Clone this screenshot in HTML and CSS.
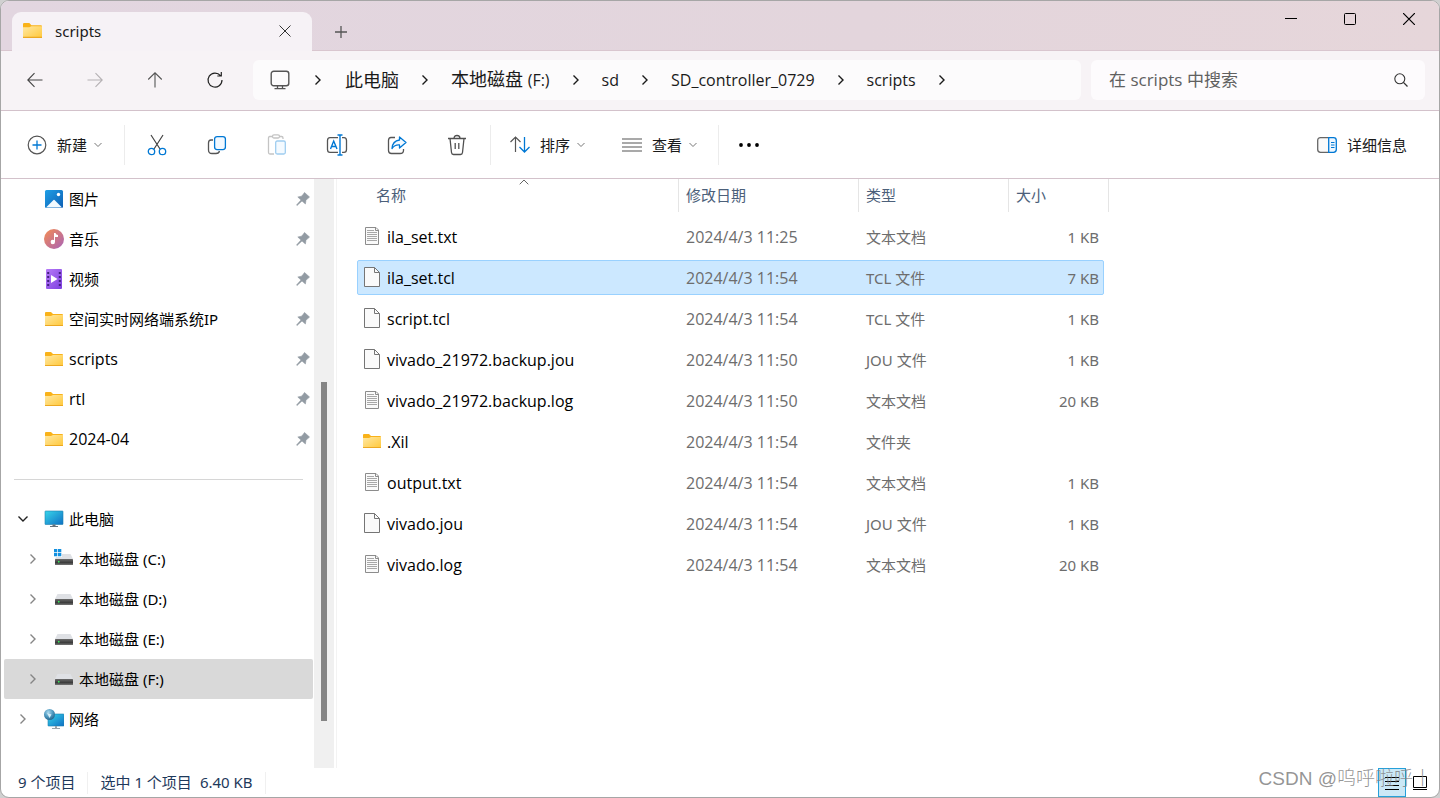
FILE: index.html
```html
<!DOCTYPE html>
<html lang="zh-CN">
<head>
<meta charset="utf-8">
<title>scripts</title>
<link rel="stylesheet" href="styles.css">
</head>
<body>
<svg class="defs" aria-hidden="true">
  <defs>
    <linearGradient id="gFolder" x1="0" y1="0" x2="1" y2="1"><stop offset="0" stop-color="#ffe8a3"/><stop offset="1" stop-color="#ffc83a"/></linearGradient>
    <linearGradient id="gPic" x1="0" y1="0" x2="1" y2="1"><stop offset="0" stop-color="#1e9fe6"/><stop offset="1" stop-color="#0f5fb4"/></linearGradient>
    <linearGradient id="gMusic" x1="0" y1="0" x2="1" y2="1"><stop offset="0" stop-color="#f58d52"/><stop offset="1" stop-color="#a862b8"/></linearGradient>
    <linearGradient id="gVideo" x1="0" y1="0" x2="1" y2="1"><stop offset="0" stop-color="#b77bf7"/><stop offset="1" stop-color="#7d3fe0"/></linearGradient>
    <linearGradient id="gPc" x1="0" y1="0" x2="1" y2="1"><stop offset="0" stop-color="#37d5ea"/><stop offset="1" stop-color="#1070c4"/></linearGradient>
    <linearGradient id="gDrive" x1="0" y1="0" x2="0" y2="1"><stop offset="0" stop-color="#6a6a6a"/><stop offset="0.6" stop-color="#3c3c3c"/><stop offset="1" stop-color="#777"/></linearGradient>
    <radialGradient id="gGlobe" cx="0.4" cy="0.3" r="0.7"><stop offset="0" stop-color="#a8d8ee"/><stop offset="0.6" stop-color="#4a95bd"/><stop offset="1" stop-color="#28688f"/></radialGradient>
  </defs>
  <symbol id="folder" viewBox="0 0 18 14"><path d="M0 1Q0 0 1 0H6L8 2H17Q18 2 18 3V6H0Z" fill="#f9b219"/><path d="M0 4H6L8 3H18V14H0Z" fill="url(#gFolder)"/><path d="M0 13H18V14H0Z" fill="#eca822"/></symbol>
  <symbol id="text-file" viewBox="0 0 18 20"><path d="M2.500 1.500H13L15.500 4V18.500H2.500Z" fill="#fafafa" stroke="#8c8c8c"/><path d="M12.500 1.500V4.500H15.500" fill="none" stroke="#8c8c8c"/><path d="M4 4.500H11M4 6.500H14M4 8.500H14M4 10.500H14M4 12.500H14M4 14.500H14" stroke="#a8a8a8"/></symbol>
  <symbol id="blank-file" viewBox="0 0 18 20"><path d="M1.500 0.500H11.500L16.500 5.500V19.500H1.500Z" fill="#fafafa" stroke="#757575"/><path d="M11.500 0.500V5.500H16.500" fill="none" stroke="#757575"/></symbol>
  <symbol id="pin" viewBox="0 0 14 14"><path d="M8.500 0.500L13.500 5L11.800 6.500L10 8.300L9.400 12L6 9L1 13.500L0.500 13L5 8.100L1.800 5L5.500 4.200L7.300 2.200Z" fill="#929ba3" stroke="#929ba3" stroke-width=".6"/></symbol>
  <symbol id="drive" viewBox="0 0 20 20"><path d="M3.500 5H16.500L19 10H1Z" fill="#dfe1e5"/><rect x="1" y="10" width="18" height="6" rx="0.500" fill="url(#gDrive)"/><rect x="4" y="12" width="1.500" height="1.500" fill="#35f05a"/></symbol>
  <symbol id="chev-right" viewBox="0 0 10 12"><path d="M2.500 1.500L7 6L2.500 10.500" fill="none" stroke="currentColor" stroke-width="1.400"/></symbol>
  <symbol id="chev-down" viewBox="0 0 8 6"><path d="M0.500 1L4 4.500L7.500 1" fill="none" stroke="#777"/></symbol>
</svg>
<div class="window">
  <header class="titlebar">
    <div class="tab">
      <svg width="19" height="15"><use href="#folder"/></svg>
      <span class="tab-title">scripts</span>
      <button class="plain" aria-label="关闭标签页"><svg width="12" height="12" viewBox="0 0 12 12"><path d="M.5.500L11.500 11.500M11.500.500L.500 11.500" stroke="#333" fill="none"/></svg></button>
    </div>
    <button class="plain new-tab" aria-label="新标签页"><svg width="14" height="14" viewBox="0 0 14 14"><path d="M7 1V13M1 7H13" stroke="#555" stroke-width="1.300"/></svg></button>
    <div class="caption">
      <button class="plain" aria-label="最小化"><svg width="12" height="12" viewBox="0 0 12 12"><path d="M0 5.500H12" stroke="#000"/></svg></button>
      <button class="plain" aria-label="最大化"><svg width="12" height="12" viewBox="0 0 12 12"><rect x=".5" y=".5" width="11" height="11" rx="1" fill="none" stroke="#000"/></svg></button>
      <button class="plain" aria-label="关闭"><svg width="12" height="12" viewBox="0 0 12 12"><path d="M0 0L12 12M12 0L0 12" stroke="#000" stroke-width="1.200"/></svg></button>
    </div>
  </header>

  <nav class="navbar">
    <button class="plain nav-btn" aria-label="后退"><svg width="16" height="16" viewBox="0 0 16 16"><path d="M15.500 8H1M7.500 1.200L.8 8L7.500 14.800" fill="none" stroke="#444" stroke-width="1.100"/></svg></button>
    <button class="plain nav-btn" aria-label="前进"><svg width="16" height="16" viewBox="0 0 16 16"><path d="M.5 8H15M8.500 1.200L15.200 8L8.500 14.800" fill="none" stroke="#b5b1b4" stroke-width="1.100"/></svg></button>
    <button class="plain nav-btn" aria-label="向上"><svg width="16" height="16" viewBox="0 0 16 16"><path d="M8 15.500V1M1.200 7.500L8 .8L14.800 7.500" fill="none" stroke="#555" stroke-width="1.100"/></svg></button>
    <button class="plain nav-btn" aria-label="刷新"><svg width="18" height="18" viewBox="0 0 18 18"><path d="M16 9A7 7 0 1 1 14.500 4.700M15.300 1V5H11.300" fill="none" stroke="#222" stroke-width="1.200"/></svg></button>
    <div class="address">
      <svg width="20" height="20" viewBox="0 0 20 20"><rect x="1.200" y="1.200" width="17.600" height="14.600" rx="2.500" fill="none" stroke="#555" stroke-width="1.400"/><path d="M7.500 16V18.500M12.500 16V18.500M4.500 18.700H15.500" stroke="#555" stroke-width="1.300"/></svg>
      <svg class="crumb-sep first" width="10" height="12"><use href="#chev-right"/></svg>
      <a href="#" class="crumb">此电脑</a>
      <svg class="crumb-sep" width="10" height="12"><use href="#chev-right"/></svg>
      <a href="#" class="crumb">本地磁盘 <span class="latin">(F:)</span></a>
      <svg class="crumb-sep" width="10" height="12"><use href="#chev-right"/></svg>
      <a href="#" class="crumb latin">sd</a>
      <svg class="crumb-sep" width="10" height="12"><use href="#chev-right"/></svg>
      <a href="#" class="crumb latin">SD_controller_0729</a>
      <svg class="crumb-sep" width="10" height="12"><use href="#chev-right"/></svg>
      <a href="#" class="crumb latin">scripts</a>
      <svg class="crumb-sep" width="10" height="12"><use href="#chev-right"/></svg>
    </div>
    <label class="search">
      <input type="text" placeholder="在 scripts 中搜索" aria-label="搜索">
      <svg width="14" height="14" viewBox="0 0 14 14"><circle cx="5.800" cy="5.800" r="5" fill="none" stroke="#333" stroke-width="1.100"/><path d="M9.400 9.400L13.500 13.500" stroke="#333" stroke-width="1.300"/></svg>
    </label>
  </nav>

  <div class="toolbar">
    <button class="tool new"><svg width="20" height="20" viewBox="0 0 20 20"><circle cx="10" cy="10" r="8.800" fill="none" stroke="#555" stroke-width="1.200"/><path d="M10 5.500V14.500M5.500 10H14.500" stroke="#0078d4" stroke-width="1.300"/></svg><span>新建</span><svg width="8" height="6"><use href="#chev-down"/></svg></button>
    <div class="group">
      <button class="tool icon" aria-label="剪切"><svg width="20" height="22" viewBox="0 0 20 22"><path d="M4 1L13 15M16 1L7 15" stroke="#444" stroke-width="1.200"/><circle cx="4.500" cy="17.500" r="3.200" fill="none" stroke="#0078d4" stroke-width="1.300"/><circle cx="15.500" cy="17.500" r="3.200" fill="none" stroke="#0078d4" stroke-width="1.300"/></svg></button>
      <button class="tool icon" aria-label="复制"><svg width="20" height="20" viewBox="0 0 20 20"><path d="M6 5H4Q1.500 5 1.500 8V15Q1.500 18.500 5 18.500H9Q12 18.500 12.500 16" fill="none" stroke="#555" stroke-width="1.300"/><rect x="7.600" y="1.600" width="10.800" height="13" rx="2.500" fill="#f2f9ff" stroke="#0078d4" stroke-width="1.300"/></svg></button>
      <button class="tool icon" aria-label="粘贴" disabled><svg width="20" height="21" viewBox="0 0 20 21"><path d="M6 2.500H2.800Q1.500 2.500 1.500 4V18.500Q1.500 20 3 20H7M13 2.500H14.500Q16 2.500 16 4V5" fill="none" stroke="#c4c4c4" stroke-width="1.300"/><rect x="5.500" y=".8" width="7" height="3.200" rx="1.500" fill="none" stroke="#c4c4c4" stroke-width="1.300"/><rect x="8.700" y="7" width="9.600" height="13" rx="1.500" fill="#f4faff" stroke="#9fcdf0" stroke-width="1.300"/></svg></button>
      <button class="tool icon" aria-label="重命名"><svg width="22" height="22" viewBox="0 0 22 22"><path d="M12 3.600H4Q1.500 3.600 1.500 6.500V15.500Q1.500 18.400 4 18.400H12M16 3.600H18Q20.500 3.600 20.500 6.500V15.500Q20.500 18.400 18 18.400H16" fill="none" stroke="#555" stroke-width="1.300"/><path d="M4.500 15L7.700 7L11 15M5.500 12.500H10M11.500 1H16.500M11.500 21H16.500M14 1V21" fill="none" stroke="#0078d4" stroke-width="1.400"/></svg></button>
      <button class="tool icon" aria-label="共享"><svg width="20" height="20" viewBox="0 0 20 20"><path d="M8 2.500H4Q1.500 2.500 1.500 5.500V15.500Q1.500 18.500 4.500 18.500H13Q16.500 18.500 16.500 15.500V14" fill="none" stroke="#555" stroke-width="1.300"/><path d="M12.500 2L19 7.500L12.500 13V10Q8 9.500 5 13.500Q5.500 6 12.500 5Z" fill="#f2f9ff" stroke="#0078d4" stroke-width="1.300" stroke-linejoin="round"/></svg></button>
      <button class="tool icon" aria-label="删除"><svg width="20" height="22" viewBox="0 0 20 22"><path d="M1 4.500H19M7 4.500Q7 1.500 10 1.500Q13 1.500 13 4.500M3 4.500L4.500 18.500Q4.700 20.500 6.500 20.500H13.500Q15.300 20.500 15.500 18.500L17 4.500M8.200 9V15M11.800 9V15" fill="none" stroke="#505050" stroke-width="1.300"/></svg></button>
    </div>
    <div class="group views">
      <button class="tool"><svg width="20" height="20" viewBox="0 0 20 20"><path d="M5.500 17V2M.5 7L5.500 2L10.500 7" fill="none" stroke="#555" stroke-width="1.200"/><path d="M14.500 2V17M9.500 12L14.500 17L19.500 12" fill="none" stroke="#0078d4" stroke-width="1.300"/></svg><span>排序</span><svg width="8" height="6"><use href="#chev-down"/></svg></button>
      <button class="tool"><svg width="20" height="20" viewBox="0 0 20 20"><path d="M0 4H20M0 8H20M0 12H20M0 16H20" stroke="#555" stroke-width="1.200"/></svg><span>查看</span><svg width="8" height="6"><use href="#chev-down"/></svg></button>
    </div>
    <button class="tool more" aria-label="更多"><svg width="20" height="4" viewBox="0 0 20 4"><circle cx="2" cy="2" r="1.900"/><circle cx="10" cy="2" r="1.900"/><circle cx="18" cy="2" r="1.900"/></svg></button>
    <button class="tool details"><svg width="20" height="16" viewBox="0 0 20 16"><path d="M11.500.700H3.500Q.700.700.700 3.500V12.500Q.700 15.300 3.500 15.300H11.500" fill="#fafafa" stroke="#666" stroke-width="1.300"/><path d="M11.700.700H16.500Q19.300.700 19.300 3.500V12.500Q19.300 15.300 16.500 15.300H11.700Z" fill="#eef7ff" stroke="#0078d4" stroke-width="1.300"/><path d="M14 5.500H17.500M14 8H17.500M14 10.500H17.500" stroke="#0078d4"/></svg><span>详细信息</span></button>
  </div>

  <main class="body">
    <aside class="sidebar">
      <ul class="tree">
        <li class="node"><svg width="20" height="20" viewBox="0 0 20 20"><rect x="1" y="1" width="18" height="18" rx="1.500" fill="url(#gPic)"/><path d="M2 18.500L9.500 11Q10 10.500 10.500 11L18 18.500Z" fill="#f2faff"/><circle cx="14.500" cy="5.500" r="1.700" fill="#fff"/></svg><span>图片</span><svg class="pin" width="14" height="14"><use href="#pin"/></svg></li>
        <li class="node"><svg width="20" height="20" viewBox="0 0 20 20"><circle cx="10" cy="10" r="10" fill="url(#gMusic)"/><circle cx="8.800" cy="13" r="2.200" fill="#fff"/><path d="M10 4H11.500Q12 6 14 6V8H11V13H10Z" fill="#fff"/></svg><span>音乐</span><svg class="pin" width="14" height="14"><use href="#pin"/></svg></li>
        <li class="node"><svg width="20" height="20" viewBox="0 0 20 20"><rect x="2" width="16" height="20" rx="1" fill="url(#gVideo)"/><path d="M4.200 3V19M15.800 3V19" stroke="#43207f" stroke-width="2" stroke-dasharray="2 2"/><path d="M7 6L13.500 10L7 14Z" fill="#fff"/></svg><span>视频</span><svg class="pin" width="14" height="14"><use href="#pin"/></svg></li>
        <li class="node"><svg class="f" width="18" height="14"><use href="#folder"/></svg><span>空间实时网络端系统IP</span><svg class="pin" width="14" height="14"><use href="#pin"/></svg></li>
        <li class="node"><svg class="f" width="18" height="14"><use href="#folder"/></svg><span class="name">scripts</span><svg class="pin" width="14" height="14"><use href="#pin"/></svg></li>
        <li class="node"><svg class="f" width="18" height="14"><use href="#folder"/></svg><span class="name">rtl</span><svg class="pin" width="14" height="14"><use href="#pin"/></svg></li>
        <li class="node"><svg class="f" width="18" height="14"><use href="#folder"/></svg><span class="name">2024-04</span><svg class="pin" width="14" height="14"><use href="#pin"/></svg></li>
      </ul>
      <hr class="rule">
      <ul class="tree">
        <li class="node root"><svg class="arrow open" width="10" height="12"><use href="#chev-right"/></svg><svg width="20" height="20" viewBox="0 0 20 20"><rect x="1" y="2" width="18" height="13.500" rx=".5" fill="url(#gPc)" stroke="#1c7fae" stroke-width=".6"/><path d="M8.500 15.500H11.500V17H14V18H6V17H8.500Z" fill="#66727c"/></svg><span>此电脑</span></li>
        <li class="node drive"><svg class="arrow" width="10" height="12"><use href="#chev-right"/></svg><svg width="20" height="20" viewBox="0 0 20 20"><use href="#drive"/><path d="M0 0H8V8H0Z" fill="#fff"/><path d="M0 0H3.300V3.300H0ZM4 0H7.300V3.300H4ZM0 4H3.300V7.300H0ZM4 4H7.300V7.300H4Z" fill="#1290e0"/></svg><span>本地磁盘 (C:)</span></li>
        <li class="node drive"><svg class="arrow" width="10" height="12"><use href="#chev-right"/></svg><svg width="20" height="20"><use href="#drive"/></svg><span>本地磁盘 (D:)</span></li>
        <li class="node drive"><svg class="arrow" width="10" height="12"><use href="#chev-right"/></svg><svg width="20" height="20"><use href="#drive"/></svg><span>本地磁盘 (E:)</span></li>
        <li class="node drive current"><svg class="arrow" width="10" height="12"><use href="#chev-right"/></svg><svg width="20" height="20"><use href="#drive"/></svg><span>本地磁盘 (F:)</span></li>
        <li class="node root"><svg class="arrow" width="10" height="12"><use href="#chev-right"/></svg><svg width="20" height="20" viewBox="0 0 20 20"><rect x="4" y="5" width="16" height="12" rx=".5" fill="url(#gPc)" stroke="#1c7fae" stroke-width=".6"/><path d="M11 17H13V19H16V20H8V19H11Z" fill="#9aa3aa"/><circle cx="5.500" cy="5.500" r="5.500" fill="url(#gGlobe)"/><path d="M3 4L7.500 5.500L5.500 9Z" fill="#d4edf7"/></svg><span>网络</span></li>
      </ul>
    </aside>
    <div class="scroll"><div class="thumb"></div></div>
    <section class="files">
      <svg class="sort-mark" width="10" height="6" viewBox="0 0 10 6"><path d="M.7 5.300L5 1L9.300 5.300" fill="none" stroke="#666"/></svg>
      <table>
        <thead><tr><th>名称</th><th>修改日期</th><th>类型</th><th>大小</th></tr></thead>
        <tbody>
          <tr><td><svg width="18" height="20"><use href="#text-file"/></svg>ila_set.txt</td><td>2024/4/3 11:25</td><td>文本文档</td><td>1 KB</td></tr>
          <tr class="selected"><td><svg width="18" height="20"><use href="#blank-file"/></svg>ila_set.tcl</td><td>2024/4/3 11:54</td><td>TCL 文件</td><td>7 KB</td></tr>
          <tr><td><svg width="18" height="20"><use href="#blank-file"/></svg>script.tcl</td><td>2024/4/3 11:54</td><td>TCL 文件</td><td>1 KB</td></tr>
          <tr><td><svg width="18" height="20"><use href="#blank-file"/></svg>vivado_21972.backup.jou</td><td>2024/4/3 11:50</td><td>JOU 文件</td><td>1 KB</td></tr>
          <tr><td><svg width="18" height="20"><use href="#text-file"/></svg>vivado_21972.backup.log</td><td>2024/4/3 11:50</td><td>文本文档</td><td>20 KB</td></tr>
          <tr><td><svg width="18" height="14"><use href="#folder"/></svg>.Xil</td><td>2024/4/3 11:54</td><td>文件夹</td><td></td></tr>
          <tr><td><svg width="18" height="20"><use href="#text-file"/></svg>output.txt</td><td>2024/4/3 11:54</td><td>文本文档</td><td>1 KB</td></tr>
          <tr><td><svg width="18" height="20"><use href="#blank-file"/></svg>vivado.jou</td><td>2024/4/3 11:54</td><td>JOU 文件</td><td>1 KB</td></tr>
          <tr><td><svg width="18" height="20"><use href="#text-file"/></svg>vivado.log</td><td>2024/4/3 11:54</td><td>文本文档</td><td>20 KB</td></tr>
        </tbody>
      </table>
    </section>
  </main>

  <footer class="status">
    <span class="cell">9 个项目</span>
    <span class="cell"><span>选中 1 个项目</span><span>6.40 KB</span></span>
    <div class="modes">
      <button class="mode on" aria-label="详细信息视图"><svg width="14" height="14" viewBox="0 0 14 14"><path d="M0 1.500H14M0 5.500H14M0 9.500H14M0 13.500H14" stroke="#000"/></svg></button>
      <button class="mode" aria-label="大图标视图"><svg width="14" height="14" viewBox="0 0 14 14"><path d="M.5.500H13.500V11.500H.5ZM0 13.500H14" fill="none" stroke="#000"/></svg></button>
    </div>
  </footer>
  <div class="watermark">CSDN @呜呼啦呼丨</div>
</div>
</body>
</html>
```
FILE: styles.css
```css
* { box-sizing: border-box; }

body {
  margin: 0;
  background: #d0d0d0;
  color: #000;
  font: 15px/20px "Noto Sans", "Noto Sans CJK SC", sans-serif;
}

.defs { position: absolute; width: 0; height: 0; }

svg { flex: none; display: block; }

button { font: inherit; color: inherit; border: 0; background: none; padding: 0; }

.plain { display: flex; align-items: center; justify-content: center; }

.window {
  position: relative;
  display: flex;
  flex-direction: column;
  height: 100vh;
  border: 1px solid #a6a6a6;
  border-radius: 9px;
  background: #fff;
  overflow: hidden;
}

/* Title bar */
.titlebar {
  display: flex;
  height: 50px;
  flex: none;
  background: linear-gradient(90deg, #e2d6e0, #e3d5dc 60%, #e6d6da);
  border-bottom: 1px solid #d9c6cf;
}

.tab {
  display: flex;
  align-items: center;
  width: 300px;
  height: 39px;
  margin: 11px 0 0 11px;
  padding: 0 21px 2px 11px;
  border-radius: 9px 9px 0 0;
  background: #f6f2f6;
}

.tab-title { flex: 1; margin-left: 13px; color: #1a1a1a; }

.new-tab { width: 30px; height: 30px; margin: 16px 0 0 14px; }

.caption { display: flex; height: 36px; margin-left: auto; padding-right: 1px; }
.caption button { width: 59px; }

/* Navigation */
.navbar {
  display: flex;
  align-items: center;
  height: 60px;
  flex: none;
  padding: 0 14px 2px 4px;
  background: #f7f3f6;
  border-bottom: 1px solid #d3c2cb;
}

.nav-btn { width: 60px; height: 40px; }

.address {
  display: flex;
  align-items: center;
  flex: 1;
  height: 40px;
  margin: 0 10px 0 8px;
  padding-left: 17px;
  border-radius: 6px;
  background: #fcfbfc;
  color: #1a1a1a;
}

.crumb { color: inherit; text-decoration: none; font-size: 18px; white-space: nowrap; }
.latin { font-size: 16px; font-family: "Open Sans", "Noto Sans", sans-serif; }
.crumb-sep { margin: 0 21px; }
.crumb-sep.first { margin: 0 22px 0 23px; }

.search {
  display: flex;
  align-items: center;
  width: 334px;
  height: 40px;
  padding: 0 17px 0 18px;
  border-radius: 6px;
  background: #fdfbfd;
}

.search input {
  flex: 1;
  min-width: 0;
  padding: 0;
  border: 0;
  outline: 0;
  background: none;
  font: 17px/24px "Open Sans", "Noto Sans CJK SC", sans-serif;
}
.search input::placeholder { color: #606060; opacity: 1; }

/* Command bar */
.toolbar {
  display: flex;
  align-items: center;
  height: 68px;
  flex: none;
  padding: 0 32px 0 26px;
  border-bottom: 1px solid #d3c2cb;
  color: #1a1a1a;
}

.tool { display: flex; align-items: center; gap: 10px; }
.tool svg + span + svg { margin-left: -3px; }
.tool.new { margin-right: 22px; }
.tool.icon { width: 60px; height: 40px; justify-content: center; }

.group {
  display: flex;
  align-items: center;
  height: 40px;
  padding: 0 3px 0 2px;
  border-left: 1px solid #ececec;
}

.group.views { gap: 37px; padding: 0 21px 0 19px; border-right: 1px solid #ececec; }

.more { margin-left: 20px; }
.details { margin-left: auto; }

/* Content */
.body { display: flex; flex: 1; min-height: 0; }

.sidebar { width: 313px; flex: none; padding-left: 3px; overflow: hidden; }

.tree { list-style: none; margin: 0; padding: 0; }

.node {
  display: flex;
  align-items: center;
  gap: 5px;
  height: 40px;
  margin-right: 1px;
  padding: 0 3px 0 40px;
  white-space: nowrap;
}

.node .f { margin: 0 1px; }
.node .pin { margin-left: auto; }
.node.root { padding-left: 14px; }
.node.root .arrow, .node.drive .arrow { margin-right: 11px; }
.node.drive { padding-left: 24px; }
.node.current { background: #d9d9d9; border-radius: 2px; }

.arrow { color: #858585; }
.arrow.open { color: #222; transform: rotate(90deg); }

.name, tbody td:first-child, td:nth-child(2) {
  font-family: "Open Sans", "Noto Sans", sans-serif;
  font-size: 16px;
}

.rule { height: 1px; margin: 20px 11px 19px 10px; border: 0; background: #d6d6d6; }

.scroll { width: 20px; flex: none; padding-top: 203px; background: #f0f0f0; }
.thumb { width: 6px; height: 339px; margin: 0 auto; background: #858585; }

.files {
  position: relative;
  flex: 1;
  margin-left: 2px;
  padding-left: 20px;
  border-left: 1px solid #f3f3f3;
}

.sort-mark { position: absolute; left: 182px; top: 0; }

table, thead, tbody { display: block; }
tbody { display: grid; gap: 6px; margin-top: 7px; }

tr { display: grid; grid-template-columns: 322px 180px 150px 100px; }
thead tr { height: 33px; }
th {
  padding: 6px 7px 0;
  border-right: 1px solid #e5e5e5;
  color: #4c607a;
  font-weight: 400;
  text-align: left;
}
th:first-child { padding-left: 19px; }

tbody tr {
  grid-template-columns: 321px 180px 150px 94px;
  width: 747px;
  height: 35px;
  border: 1px solid transparent;
  border-radius: 2px;
  align-items: center;
}
td { padding: 0 0 0 7px; color: #6d6d6d; white-space: nowrap; }
td:first-child { display: flex; align-items: center; gap: 6px; padding-left: 5px; color: #000; }
td:last-child { padding: 0 4px 0 0; text-align: right; }
td svg { margin-bottom: 2px; }
.selected { background: #cce8ff; border-color: #99d1ff; }

/* Status bar */
.status {
  display: flex;
  align-items: center;
  height: 29px;
  flex: none;
  padding-left: 17px;
  color: #1e395b;
}

.cell { display: flex; gap: 8px; padding: 0 12px 2px 0; border-right: 1px solid #f0f0f0; }
.cell + .cell { padding-left: 12px; }

.modes { display: flex; height: 29px; margin-left: auto; padding-right: 5px; }
.mode { display: flex; align-items: center; justify-content: center; width: 28px; }
.mode.on { border: 1px solid #26a0da; background: #cbe8f6; }

.watermark {
  position: absolute;
  right: 7px;
  bottom: 6px;
  color: rgba(130, 130, 130, 0.85);
  font: 300 19px/24px "Liberation Sans", "Noto Sans CJK SC", sans-serif;
  pointer-events: none;
}
```
